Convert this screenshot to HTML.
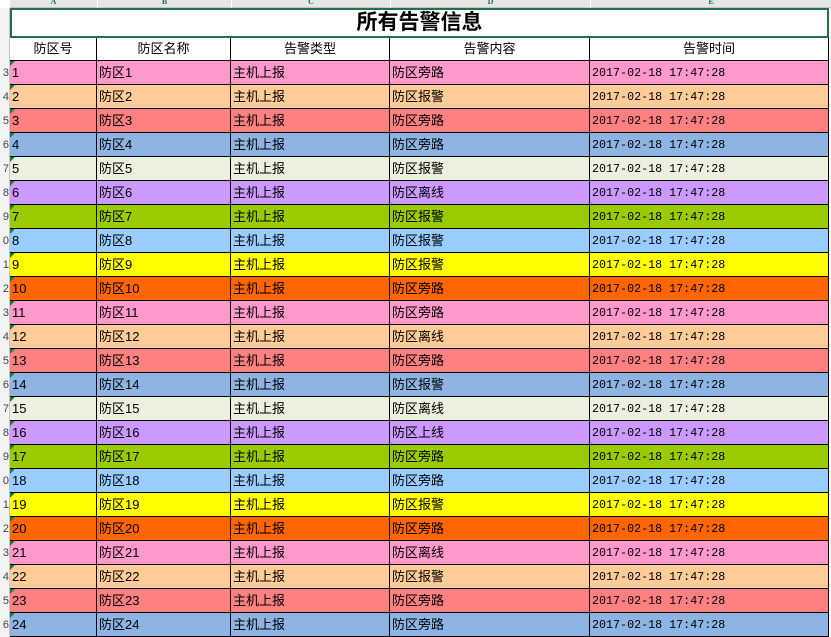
<!DOCTYPE html>
<html><head><meta charset="utf-8"><style>
html,body{margin:0;padding:0;width:831px;height:618px;overflow:hidden;background:#fff;font-family:"Liberation Sans","Noto Sans CJK SC",sans-serif;}
.ch{position:absolute;top:0;height:7px;background:#e6e6e6;border-bottom:1px solid #c6c6c6;font:bold 8px "Liberation Serif",serif;color:#217346;text-align:center;line-height:4px;overflow:hidden}
.gut{position:absolute;left:0;width:9px;background:#f3f3f3;border-right:1px solid #c6c6c6;font-size:11px;color:#444;text-align:right;overflow:hidden}
.title{position:absolute;left:10px;top:8px;width:815px;height:26px;border:2px solid #217346;text-align:center;font:bold 21px/26px "Liberation Sans","Noto Sans CJK SC",sans-serif;color:#000}
.row{position:absolute;left:10px;height:24px;width:820px}
.c{position:absolute;top:0;height:23px;border-right:1px solid #000;border-bottom:1px solid #000;font-size:13px;line-height:24px;padding-left:2px;box-sizing:content-box;white-space:nowrap;overflow:hidden}
.h .c{text-align:center;padding-left:0}
.m{font-family:"Liberation Mono",monospace;font-size:11.7px}
.tri{position:absolute;left:0;top:0;width:0;height:0;border-top:5px solid #1e7b34;border-right:5px solid transparent}
</style></head><body>
<div class="ch" style="left:10px;width:87px">A</div>
<div class="ch" style="left:98px;width:133px">B</div>
<div class="ch" style="left:232px;width:158px">C</div>
<div class="ch" style="left:391px;width:199px">D</div>
<div class="ch" style="left:591px;width:240px">E</div>
<div class="gut" style="top:8px;height:610px"></div>
<div class="title">所有告警信息</div>
<div id="t"></div>
<script>
(function(){
var cols=[[0,87],[87,134],[221,159],[380,200],[580,239]];
var colors=["#FF99CC","#FFCC99","#FF8080","#8DB4E2","#EBF1DE","#CC99FF","#99CC00","#99CCFF","#FFFF00","#FF6600"];
var d=["旁路","报警","旁路","旁路","报警","离线","报警","报警","报警","旁路","旁路","离线","旁路","报警","离线","上线","旁路","旁路","报警","旁路","离线","报警","旁路"];
var h='<div class="row h" style="top:38px">';
var hd=["防区号","防区名称","告警类型","告警内容","告警时间"];
for(var j=0;j<5;j++)h+='<div class="c" style="left:'+cols[j][0]+'px;width:'+(cols[j][1]-1)+'px;height:22px;line-height:22px;background:#fff">'+hd[j]+'</div>';
h+='</div>';
for(var i=0;i<24;i++){
 var n=i+1,yy=61+i*24,bg=colors[i%10];
 h+='<div class="gut" style="top:'+yy+'px;height:24px;line-height:24px">'+(n+2)%10+'</div>';
 h+='<div class="row" style="top:'+yy+'px">';
 var v=[String(n),"防区"+n,"主机上报","防区"+(d[i]||"旁路"),"2017-02-18 17:47:28"];
 for(var j=0;j<5;j++){
  h+='<div class="c'+(j==4?' m':'')+'" style="left:'+cols[j][0]+'px;width:'+(cols[j][1]-3)+'px;background:'+bg+'">'+(j==0?'<span class="tri"></span>':'')+v[j]+'</div>';
 }
 h+='</div>';
}
document.getElementById('t').innerHTML=h;
})();
</script>
</body></html>
